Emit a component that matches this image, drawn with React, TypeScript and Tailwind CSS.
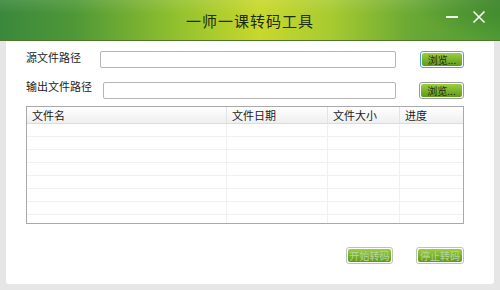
import React from 'react';

const font = { fontFamily: '"Noto Sans CJK SC", "Noto Sans", sans-serif' };

function GreenButton({ label, focused, disabled }: { label: string; focused?: boolean; disabled?: boolean }) {
  return (
    <div
      className={`flex h-[17px] items-center justify-center rounded-[3px] border p-px ${
        focused ? 'border-[#4aa3d9]' : disabled ? 'border-[#bcc4b4]' : 'border-[#9a9a9a]'
      }`}
    >
      <div
        className={`flex h-full w-full items-center justify-center whitespace-nowrap rounded-[2px] bg-gradient-to-b from-[#9ccf3f] to-[#5d9a1a] text-[10px] leading-none ${
          disabled ? 'text-[#b9d69c]' : 'text-[#1d2a10]'
        }`}
      >
        {label}
      </div>
    </div>
  );
}

export default function App() {
  const cols = [
    { name: '文件名', w: 'w-[200px]' },
    { name: '文件日期', w: 'w-[101px]' },
    { name: '文件大小', w: 'w-[72px]' },
    { name: '进度', w: 'flex-1' },
  ];
  const rows = [0, 1, 2, 3, 4, 5, 6, 7];

  return (
    <div className="flex h-[290px] w-[500px] flex-col overflow-hidden bg-[#e6e6e6]" style={font}>
      {/* Title bar */}
      <div className="relative flex h-[41px] shrink-0 items-center justify-center border-b border-[#4d7a2a] bg-[linear-gradient(90deg,#3a883c_0%,#4f9837_15%,#94c22d_36%,#c9d82b_52%,#a8cb30_66%,#6aa934_82%,#4f9a36_100%)]">
        <div className="absolute inset-x-0 top-0 h-[14px] bg-gradient-to-b from-white/10 to-transparent" />
        <div className="absolute right-0 top-0 h-[40px] w-[90px] bg-[radial-gradient(ellipse_at_top_right,rgba(40,110,30,0.45),transparent_70%)]" />
        <span className="relative mt-[2px] text-[15px] tracking-[1px] text-[#1c2a12]">一师一课转码工具</span>
        <div className="absolute right-[14px] top-[10px] flex items-center gap-[14px] text-white">
          <span className="block h-[2px] w-[12px] bg-white/90" />
          <svg width="14" height="14" viewBox="0 0 14 14">
            <path d="M1.5 1.5 L12.5 12.5 M12.5 1.5 L1.5 12.5" stroke="white" strokeWidth="1.6" />
          </svg>
        </div>
      </div>

      {/* Body */}
      <div className="flex flex-1 px-[6px] pb-[6px]">
        <div className="flex flex-1 flex-col rounded-b-[3px] bg-white pl-[20px] pr-[29px]">
          {/* Row 1 */}
          <div className="mt-[10px] flex h-[17px] items-start">
            <span className="w-[74px] text-[11px] leading-[13px] text-[#222]">源文件路径</span>
            <div className="h-[17px] w-[296px] rounded-[2px] border border-[#b5b5b5] bg-white" />
            <div className="ml-[24px] w-[44px]">
              <GreenButton label="浏览..." focused />
            </div>
          </div>
          {/* Row 2 */}
          <div className="mt-[14px] flex h-[17px] items-start">
            <span className="-mt-[1px] w-[77px] text-[11px] leading-[11px] text-[#222]">输出文件路径</span>
            <div className="h-[17px] w-[293px] rounded-[2px] border border-[#b5b5b5] bg-white" />
            <div className="ml-[23px] w-[45px]">
              <GreenButton label="浏览..." />
            </div>
          </div>

          {/* Table */}
          <div className="mt-[7px] flex h-[118px] w-[438px] flex-col overflow-hidden border border-[#a9a9a9] bg-white">
            <div className="flex h-[17px] shrink-0 border-b border-[#dcdcdc] bg-gradient-to-b from-white to-[#efefef]">
              {cols.map((c, i) => (
                <div
                  key={c.name}
                  className={`${c.w} flex items-center pl-[5px] text-[11px] text-[#1a1a1a] ${i < 3 ? 'border-r border-[#e4e4e4]' : ''}`}
                >
                  {c.name}
                </div>
              ))}
            </div>
            {rows.map((r) => (
              <div key={r} className="flex h-[13px] shrink-0 border-b border-[#f0f0f0]">
                {cols.map((c, i) => (
                  <div key={c.name} className={`${c.w} ${i < 3 ? 'border-r border-[#f0f0f0]' : ''}`} />
                ))}
              </div>
            ))}
          </div>

          {/* Bottom buttons */}
          <div className="mt-[23px] flex w-[438px] justify-end gap-[23px]">
            <div className="w-[47px]">
              <GreenButton label="开始转码" disabled />
            </div>
            <div className="w-[48px]">
              <GreenButton label="停止转码" disabled />
            </div>
          </div>
        </div>
      </div>
    </div>
  );
}
